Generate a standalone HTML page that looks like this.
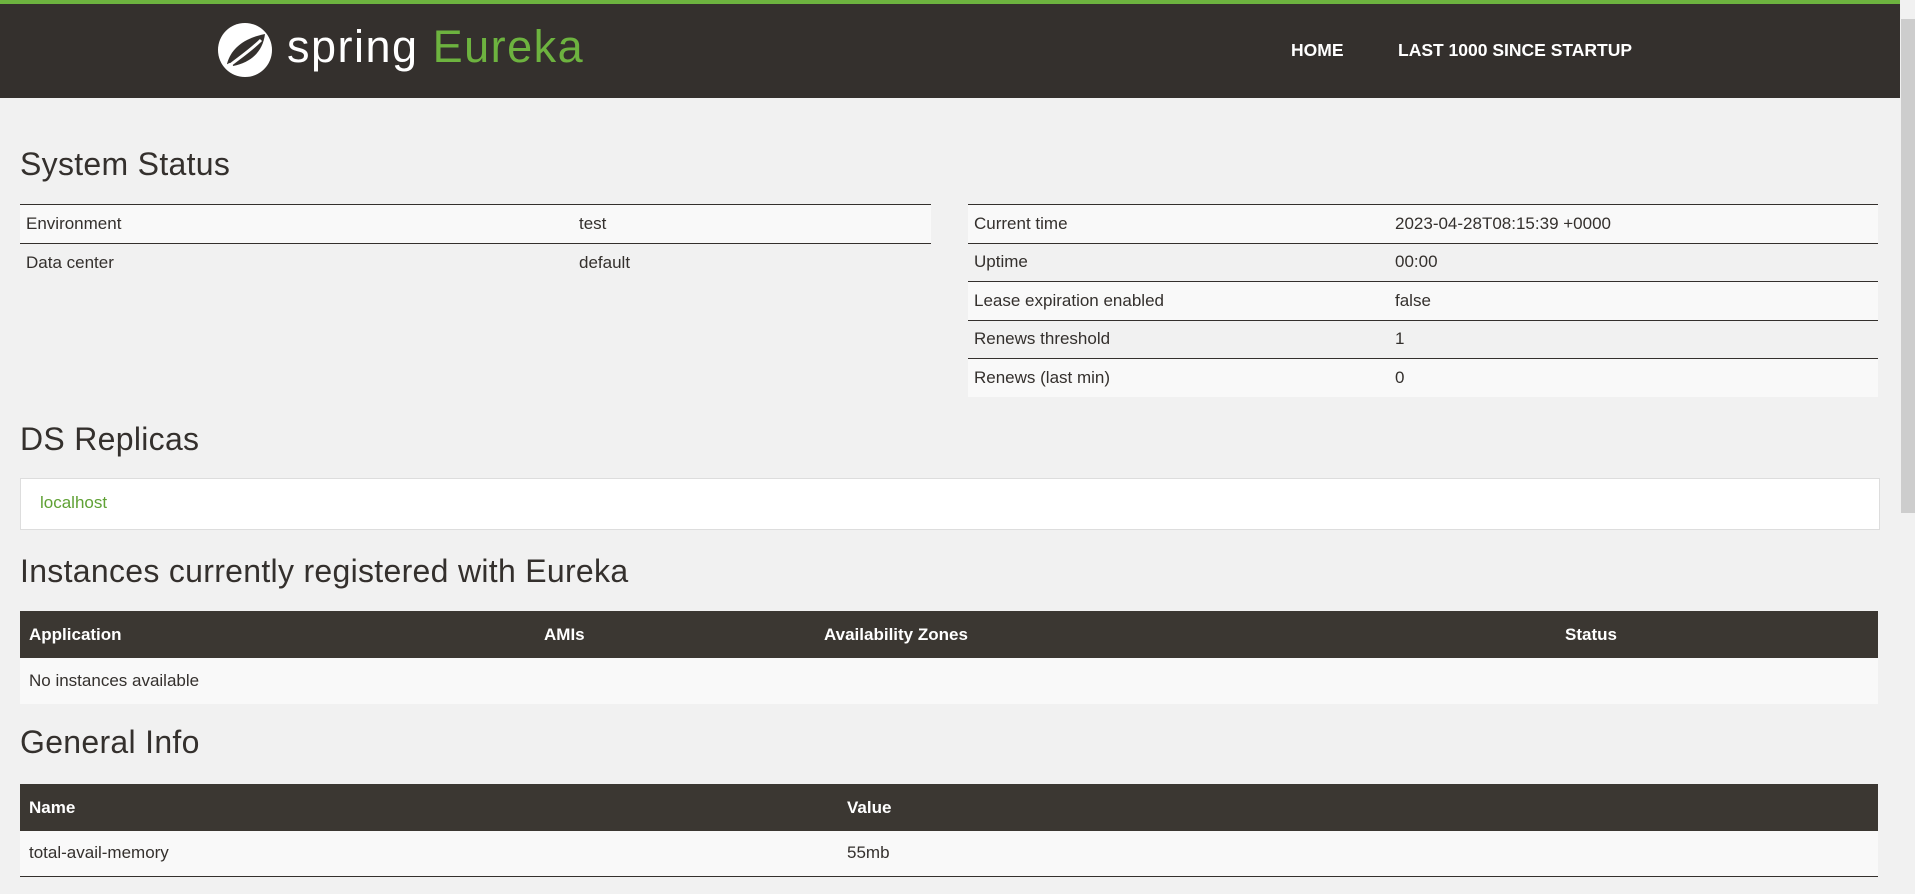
<!DOCTYPE html>
<html><head><meta charset="utf-8"><style>
*{margin:0;padding:0;box-sizing:border-box}
html,body{width:1915px;height:894px;overflow:hidden;background:#f1f1f1;font-family:"Liberation Sans",sans-serif;color:#34302d}
.top{position:absolute;left:0;top:0;width:1900px;height:98px;background:#34302d;border-top:4px solid #6db33f}
.logo{position:absolute;left:217px;top:16px}
.brand{position:absolute;left:287px;top:17px;font-size:45px;color:#fff;letter-spacing:1.5px}
.brand span{color:#6db33f}
.nav{position:absolute;top:36px;color:#fff;font-weight:bold;font-size:17.5px}
h2{position:absolute;left:20px;font-size:32px;font-weight:normal;color:#34302d;letter-spacing:0.3px}
table{position:absolute;border-collapse:collapse;font-size:17px}
td,th{height:38.5px;padding:0 0 0 6px;text-align:left;vertical-align:middle}
.st tr{border-top:1px solid #34302d}
.st tr:nth-child(odd){background:#f9f9f9}
.dk th{background:#3b3732;color:#fff;font-weight:bold;height:47px;padding-left:9px}
.dk td{background:#f9f9f9;height:46px;padding-left:9px}
.sb{position:absolute;left:1900px;top:0;width:15px;height:894px;background:#f1f1f1}
.th{position:absolute;left:1901px;top:19px;width:14px;height:494px;background:#cdcdcd}
</style></head><body>
<div class="top">
<svg class="logo" width="56" height="60" viewBox="0 0 56 60"><circle cx="28" cy="30" r="27" fill="#fff"/><path d="M10 44 C14 28 28 18 48 14 C46 30 36 42 16 46 Z" fill="#34302d"/><path d="M12 46 C22 38 34 30 44 20" stroke="#fff" stroke-width="3" fill="none"/><circle cx="13" cy="46" r="3" fill="#fff"/></svg>
<div class="brand">spring <span>Eureka</span></div>
<div class="nav" style="left:1291px">HOME</div>
<div class="nav" style="left:1398px">LAST 1000 SINCE STARTUP</div>
</div>
<h2 style="top:146px">System Status</h2>
<table class="st" style="left:20px;top:204px;width:911px">
<tr><td style="width:553px">Environment</td><td>test</td></tr>
<tr><td>Data center</td><td>default</td></tr>
</table>
<table class="st" style="left:968px;top:204px;width:910px">
<tr><td style="width:421px">Current time</td><td>2023-04-28T08:15:39 +0000</td></tr>
<tr><td>Uptime</td><td>00:00</td></tr>
<tr><td>Lease expiration enabled</td><td>false</td></tr>
<tr><td>Renews threshold</td><td>1</td></tr>
<tr><td>Renews (last min)</td><td>0</td></tr>
</table>
<h2 style="top:421px">DS Replicas</h2>
<div style="position:absolute;left:20px;top:478px;width:1860px;height:52px;background:#fff;border:1px solid #ddd;padding:14px 0 0 19px;font-size:17px;color:#5fa134">localhost</div>
<h2 style="top:553px">Instances currently registered with Eureka</h2>
<table class="dk" style="left:20px;top:611px;width:1858px">
<tr><th style="width:515px">Application</th><th style="width:280px">AMIs</th><th style="width:741px">Availability Zones</th><th>Status</th></tr>
<tr><td colspan="4">No instances available</td></tr>
</table>
<h2 style="top:724px">General Info</h2>
<table class="dk" style="left:20px;top:784px;width:1858px">
<tr><th style="width:818px">Name</th><th>Value</th></tr>
<tr><td style="border-bottom:1px solid #34302d;height:45px">total-avail-memory</td><td style="border-bottom:1px solid #34302d;height:45px">55mb</td></tr>
</table>
<div class="sb"></div><div class="th"></div>
</body></html>
